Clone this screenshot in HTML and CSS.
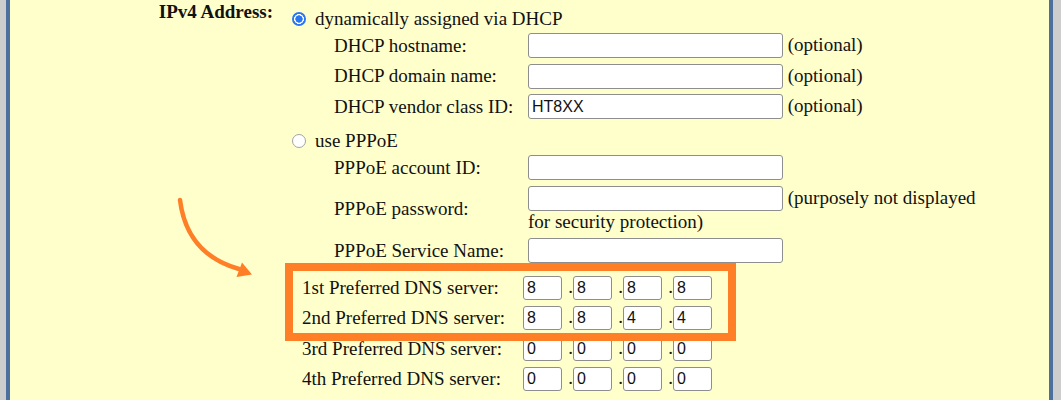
FILE: index.html
```html
<!DOCTYPE html>
<html lang="en">
<head>
<meta charset="utf-8">
<title>IPv4 Address</title>
<link rel="stylesheet" href="styles.css">
</head>
<body>
<div class="frame">
  <div class="setting">
    <div class="setting-label">IPv4 Address:</div>
    <div class="setting-body">
      <label class="choice choice-first"><input type="radio" name="ipv4" class="radio" checked>dynamically assigned via DHCP</label>
      <div class="fields">
        <span class="field-label">DHCP hostname:</span>
        <span class="field-value"><input type="text" class="text-input"> (optional)</span>
        <span class="field-label">DHCP domain name:</span>
        <span class="field-value"><input type="text" class="text-input"> (optional)</span>
        <span class="field-label">DHCP vendor class ID:</span>
        <span class="field-value"><input type="text" class="text-input" value="HT8XX"> (optional)</span>
      </div>
      <label class="choice choice-second"><input type="radio" name="ipv4" class="radio">use PPPoE</label>
      <div class="fields">
        <span class="field-label">PPPoE account ID:</span>
        <span class="field-value"><input type="text" class="text-input"></span>
        <span class="field-label">PPPoE password:</span>
        <span class="field-value"><input type="password" class="text-input"> (purposely not displayed for security protection)</span>
        <span class="field-label">PPPoE Service Name:</span>
        <span class="field-value"><input type="text" class="text-input"></span>
      </div>
      <div class="dns">
        <span class="dns-label">1st Preferred DNS server:</span>
        <span class="dns-value"><input class="octet" value="8"><span class="dot">.</span><input class="octet" value="8"><span class="dot">.</span><input class="octet" value="8"><span class="dot">.</span><input class="octet" value="8"></span>
        <span class="dns-label">2nd Preferred DNS server:</span>
        <span class="dns-value"><input class="octet" value="8"><span class="dot">.</span><input class="octet" value="8"><span class="dot">.</span><input class="octet" value="4"><span class="dot">.</span><input class="octet" value="4"></span>
        <span class="dns-label">3rd Preferred DNS server:</span>
        <span class="dns-value"><input class="octet" value="0"><span class="dot">.</span><input class="octet" value="0"><span class="dot">.</span><input class="octet" value="0"><span class="dot">.</span><input class="octet" value="0"></span>
        <span class="dns-label">4th Preferred DNS server:</span>
        <span class="dns-value"><input class="octet" value="0"><span class="dot">.</span><input class="octet" value="0"><span class="dot">.</span><input class="octet" value="0"><span class="dot">.</span><input class="octet" value="0"></span>
      </div>
    </div>
  </div>
</div>
<div class="callout"></div>
<svg class="arrow" width="90" height="95" viewBox="170 190 90 95" aria-hidden="true">
  <path d="M180,200 C184,232 200,258 239,269" fill="none" stroke="#ff7f27" stroke-width="4.5" stroke-linecap="round"/>
  <polygon points="252,274.5 242,262.5 236.5,277" fill="#ff7f27"/>
</svg>
</body>
</html>
```
FILE: styles.css
```css
* { box-sizing: border-box; }

html, body {
  margin: 0;
  height: 100%;
}

body {
  background: #cdcdcd;
  font-family: "Liberation Serif", "Times New Roman", serif;
  font-size: 19px;
  color: #111;
  overflow: hidden;
}

.frame {
  margin-left: 6px;
  width: 1047px;
  height: 400px;
  border-left: 4px solid #4c6f9e;
  border-right: 4px solid #4c6f9e;
  background: #ffffcc;
  line-height: 22px;
}

.setting {
  display: flex;
}

.setting-label {
  width: 263px;
  flex: none;
  text-align: right;
  font-weight: bold;
  padding-top: 1px;
}

.setting-body {
  margin-left: 15px;
  flex: 1;
}

.choice {
  display: flex;
  align-items: center;
  height: 22px;
}

.choice-first { margin-top: 8px; }
.choice-second { margin-top: 11px; }

.radio {
  appearance: none;
  -webkit-appearance: none;
  width: 14px;
  height: 14px;
  margin: 0 9px 0 4px;
  border-radius: 50%;
  border: 1px solid #a3a3a3;
  background: #fff;
  flex: none;
}

.radio:checked {
  border: none;
  background: radial-gradient(circle, #2a76f2 0 3.4px, #fff 3.9px 4.7px, #2a76f2 5.2px);
}

.fields {
  display: grid;
  grid-template-columns: 194px 465px;
  row-gap: 5.5px;
  align-items: center;
  margin-left: 46px;
  margin-top: 3px;
}

.field-value {
  line-height: 22px;
}

.text-input {
  width: 255px;
  height: 25px;
  margin: 0;
  padding: 0 3px;
  border: 1px solid #8e8e8e;
  border-radius: 3px;
  background: #fff;
  font: 16px "Liberation Sans", Arial, sans-serif;
  color: #111;
  vertical-align: baseline;
}

.dns {
  display: grid;
  grid-template-columns: 221px auto;
  row-gap: 6.33px;
  align-items: center;
  margin-left: 14px;
  margin-top: 13px;
}

.dns-value {
  display: flex;
  align-items: baseline;
}

.octet {
  width: 39px;
  height: 24px;
  margin: 0;
  padding: 0 3px;
  border: 1px solid #8e8e8e;
  border-radius: 3px;
  background: #fff;
  font: 16px "Liberation Sans", Arial, sans-serif;
  color: #111;
}

.dot {
  width: 11px;
  text-align: right;
}

.callout {
  position: absolute;
  left: 285px;
  top: 263px;
  width: 451px;
  height: 78px;
  border: 8px solid #ff7f27;
}

.arrow {
  position: absolute;
  left: 170px;
  top: 190px;
}
```
